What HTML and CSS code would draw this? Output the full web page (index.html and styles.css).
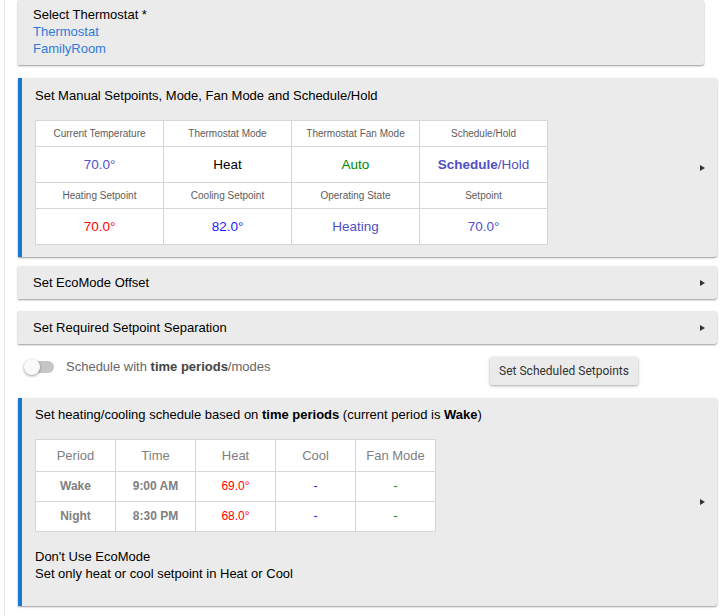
FILE: index.html
```html
<!DOCTYPE html>
<html>
<head>
  <meta charset="UTF-8">
  <title>Thermostat Scheduler</title>
  <link rel="stylesheet" href="styles.css">
</head>
<body>
  <div class="page">
    <div class="card card-select">
      <div class="card-body">
        <div>Select Thermostat *</div>
        <a class="link" href="#">Thermostat</a>
        <a class="link" href="#">FamilyRoom</a>
      </div>
    </div>

    <div class="card card-open card-manual">
      <div class="card-body">
        <div class="card-title">Set Manual Setpoints, Mode, Fan Mode and Schedule/Hold</div>
        <table class="status">
          <tr class="head">
            <td>Current Temperature</td>
            <td>Thermostat Mode</td>
            <td>Thermostat Fan Mode</td>
            <td>Schedule/Hold</td>
          </tr>
          <tr class="vals">
            <td class="c-slate">70.0°</td>
            <td>Heat</td>
            <td class="c-green">Auto</td>
            <td class="c-slate"><b>Schedule</b>/Hold</td>
          </tr>
          <tr class="head">
            <td>Heating Setpoint</td>
            <td>Cooling Setpoint</td>
            <td>Operating State</td>
            <td>Setpoint</td>
          </tr>
          <tr class="vals">
            <td class="c-red">70.0°</td>
            <td class="c-blue">82.0°</td>
            <td class="c-slate">Heating</td>
            <td class="c-slate">70.0°</td>
          </tr>
        </table>
      </div>
      <span class="arrow"></span>
    </div>

    <div class="card card-bar">
      <div class="card-body">Set EcoMode Offset</div>
      <span class="arrow"></span>
    </div>

    <div class="card card-bar">
      <div class="card-body">Set Required Setpoint Separation</div>
      <span class="arrow"></span>
    </div>

    <div class="toggle-row">
      <span class="switch"><span class="knob"></span></span>
      <span class="toggle-label">Schedule with <b>time periods</b>/modes</span>
      <button class="btn" type="button">Set Scheduled Setpoints</button>
    </div>

    <div class="card card-open card-sched">
      <div class="card-body">
        <div class="card-title">Set heating/cooling schedule based on <b>time periods</b> (current period is <b>Wake</b>)</div>
        <table class="sched">
          <tr class="head">
            <td>Period</td>
            <td>Time</td>
            <td>Heat</td>
            <td>Cool</td>
            <td>Fan Mode</td>
          </tr>
          <tr>
            <td class="strong">Wake</td>
            <td class="strong">9:00 AM</td>
            <td class="c-red">69.0°</td>
            <td class="c-blue">-</td>
            <td class="c-green">-</td>
          </tr>
          <tr>
            <td class="strong">Night</td>
            <td class="strong">8:30 PM</td>
            <td class="c-red">68.0°</td>
            <td class="c-blue">-</td>
            <td class="c-green">-</td>
          </tr>
        </table>
        <div class="notes">
          <div>Don't Use EcoMode</div>
          <div>Set only heat or cool setpoint in Heat or Cool</div>
        </div>
      </div>
      <span class="arrow"></span>
    </div>
  </div>
</body>
</html>
```

FILE: styles.css
```css
body {
  margin: 0;
  background: #fff;
  font-family: "Liberation Sans", Arial, sans-serif;
  font-size: 13px;
  line-height: 17px;
  color: #000;
}
.page {
  margin-left: 4px;
  border-left: 1px solid #e6e6e6;
  padding: 0 11px 0 13px;
  min-height: 616px;
}
.card {
  display: flex;
  align-items: center;
  background: #ebebeb;
  border-radius: 0 3px 3px 0;
  box-shadow: 0 1px 2px rgba(0,0,0,0.4);
}
.card-body {
  flex: 1;
}
.arrow {
  width: 0;
  height: 0;
  border-left: 5px solid #333;
  border-top: 3px solid transparent;
  border-bottom: 3px solid transparent;
  margin-right: 12px;
}
.card-select {
  margin-right: 13px;
  margin-bottom: 13px;
}
.card-select .card-body {
  padding: 6px 15px 8px 15px;
}
.link {
  display: block;
  color: #2f7ad8;
  text-decoration: none;
}
.card-open {
  border-left: 4px solid #1976d2;
}
.card-manual {
  margin-bottom: 9px;
}
.card-manual .card-body {
  padding: 9px 13px 12px 13px;
}
.card-title {
  margin-bottom: 16px;
}
table {
  border-collapse: collapse;
  background: #fff;
}
td {
  border: 1px solid #d6d6d6;
  text-align: center;
  padding: 0;
}
.status td {
  width: 127px;
}
.status .head td {
  height: 25px;
  font-size: 10px;
  color: #5c5c5c;
}
.status .vals td {
  height: 35px;
  font-size: 13.5px;
}
.c-slate { color: #4f4fc6; }
.c-red { color: #f00; }
.c-blue { color: #1a1aff; }
.c-green { color: #008800; }
.card-bar {
  margin-bottom: 12px;
}
.card-bar .card-body {
  padding: 8px 15px;
}
.toggle-row {
  display: flex;
  align-items: flex-start;
  height: 42px;
  padding-left: 8px;
}
.switch {
  position: relative;
  width: 28px;
  height: 12px;
  margin-top: 5px;
  background: #c6c6c6;
  border-radius: 6px;
}
.knob {
  position: absolute;
  left: -2px;
  top: -2px;
  width: 16px;
  height: 16px;
  border-radius: 50%;
  background: #fafafa;
  box-shadow: 0 1px 3px rgba(0,0,0,0.4);
}
.toggle-label {
  margin-left: 12px;
  margin-top: 2px;
  color: #666;
}
.toggle-label b {
  color: #444;
}
.btn {
  margin-left: auto;
  margin-right: 79px;
  margin-top: 1px;
  width: 148px;
  height: 28px;
  border: none;
  border-radius: 2px;
  background: #ebebeb;
  box-shadow: 0 1px 3px rgba(0,0,0,0.35);
  font-family: "Roboto", "Liberation Sans", sans-serif;
  font-size: 12px;
  color: #333;
}
.card-sched .card-body {
  padding: 8px 13px 24px 13px;
}
.sched td {
  width: 79px;
  height: 29px;
  font-size: 12px;
}
.sched .head td {
  height: 31px;
  font-size: 13px;
  color: #808080;
}
.sched .strong {
  font-weight: bold;
  color: #808080;
}
.notes {
  margin-top: 16px;
}
```
